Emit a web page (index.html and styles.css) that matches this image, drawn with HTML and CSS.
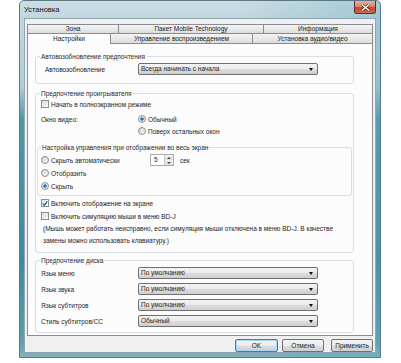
FILE: index.html
```html
<!DOCTYPE html>
<html lang="ru">
<head>
    <meta charset="UTF-8">
    <title>Установка</title>
    <link rel="stylesheet" href="styles.css">
</head>
<body>
    <div class="window">
        <div class="titlebar">
            <span class="title">Установка</span>
            <span class="close">
                <svg width="9" height="7" viewBox="0 0 9 7"><path d="M1 0.5 L8 6.5 M8 0.5 L1 6.5" stroke="#5a1a10" stroke-width="2.6"/><path d="M1 0.5 L8 6.5 M8 0.5 L1 6.5" stroke="#fff" stroke-width="1.4"/></svg>
            </span>
        </div>

        <div class="client">
            <div class="tabs">
                <div class="tab-row">
                    <div class="tab t-zone">Зона</div>
                    <div class="tab t-mobile">Пакет Mobile Technology</div>
                    <div class="tab t-info">Информация</div>
                </div>
                <div class="tab-row front">
                    <div class="tab t-settings active">Настройки</div>
                    <div class="tab t-playback">Управление воспроизведением</div>
                    <div class="tab t-av">Установка аудио/видео</div>
                </div>
            </div>

            <div class="panel">
                <fieldset class="group g-resume">
                    <legend>Автовозобновление предпочтения</legend>
                    <div class="field-row">
                        <span class="label">Автовозобновление</span>
                        <div class="select"><span>Всегда начинать с начала</span><i class="arrow"></i></div>
                    </div>
                </fieldset>

                <fieldset class="group g-player">
                    <legend>Предпочтение проигрывателя</legend>
                    <div class="check-row"><span class="box"></span>Начать в полноэкранном режиме</div>
                    <div class="field-row video-row">
                        <span class="label">Окно видео:</span>
                        <div class="radio-item"><span class="radio on"></span>Обычный</div>
                    </div>
                    <div class="field-row">
                        <span class="label"></span>
                        <div class="radio-item"><span class="radio"></span>Поверх остальных окон</div>
                    </div>

                    <fieldset class="group inner">
                        <legend>Настройка управления при отображении во весь экран</legend>
                        <div class="radio-row">
                            <div class="radio-item auto"><span class="radio"></span>Скрыть автоматически</div>
                            <div class="spin">
                                <span class="spin-value">5</span>
                                <span class="spin-btns"><i class="up"></i><i class="down"></i></span>
                            </div>
                            <span class="unit">сек</span>
                        </div>
                        <div class="radio-row">
                            <div class="radio-item"><span class="radio"></span>Отобразить</div>
                        </div>
                        <div class="radio-row">
                            <div class="radio-item"><span class="radio on"></span>Скрыть</div>
                        </div>
                    </fieldset>

                    <div class="check-row first"><span class="box checked">
                        <svg width="7" height="7" viewBox="0 0 7 7"><path d="M1 3.6 L2.8 5.5 L6.2 1" fill="none" stroke="#2656a8" stroke-width="1.4"/></svg>
                    </span>Включить отображение на экране</div>
                    <div class="check-row"><span class="box"></span>Включить симуляцию мыши в меню BD-J</div>
                    <p class="note">(Мышь может работать неисправно, если симуляция мыши отключена в меню BD-J. В качестве<br>замены можно использовать клавиатуру.)</p>
                </fieldset>

                <fieldset class="group g-disc">
                    <legend>Предпочтение диска</legend>
                    <div class="field-row">
                        <span class="label">Язык меню</span>
                        <div class="select"><span>По умолчанию</span><i class="arrow"></i></div>
                    </div>
                    <div class="field-row">
                        <span class="label">Язык звука</span>
                        <div class="select"><span>По умолчанию</span><i class="arrow"></i></div>
                    </div>
                    <div class="field-row">
                        <span class="label">Язык субтитров</span>
                        <div class="select"><span>По умолчанию</span><i class="arrow"></i></div>
                    </div>
                    <div class="field-row">
                        <span class="label">Стиль субтитров/CC</span>
                        <div class="select"><span>Обычный</span><i class="arrow"></i></div>
                    </div>
                </fieldset>
            </div>

            <div class="buttons">
                <button class="btn btn-ok">OK</button>
                <button class="btn btn-cancel">Отмена</button>
                <button class="btn btn-apply">Применить</button>
            </div>
        </div>
    </div>
</body>
</html>
```

FILE: styles.css
```css
* {
    margin: 0;
    padding: 0;
    box-sizing: border-box;
}

body {
    background-color: #fff;
    font-family: "Liberation Sans", Arial, sans-serif;
    font-size: 6.5px;
    color: #1e1e1e;
}

/* window frame */
.window {
    margin-left: 19px;
    width: 362px;
    height: 358px;
    border: 1px solid #5b7886;
    border-radius: 5px 5px 0 0;
    padding: 0 4px 4px;
    display: flex;
    flex-direction: column;
    background:
        linear-gradient(90deg, rgba(255,255,255,0) 60%, rgba(90,170,190,0.35) 100%),
        linear-gradient(180deg, #cddde4 0px, #c2d6de 20px, #b3ced8 85px, #4f98aa 118px, #3b8ca1 260px, #5c9fae 340px, #86b5bf 358px);
}

.titlebar {
    height: 17px;
    display: flex;
    justify-content: space-between;
    align-items: flex-start;
}

.title {
    line-height: 17px;
    font-size: 7.5px;
    color: #111;
}

.close {
    width: 22px;
    height: 13px;
    border: 1px solid #6b2a1e;
    border-top: none;
    border-radius: 0 0 3px 3px;
    background: linear-gradient(180deg, #e9b1a3 0%, #d98570 45%, #c4452c 55%, #d0684c 100%);
    display: flex;
    align-items: center;
    justify-content: center;
}

.client {
    flex: 1;
    border: 1px solid #8ea4ae;
    background-color: #f0f0f0;
    padding: 5px 2px 0 2px;
    display: flex;
    flex-direction: column;
}

/* tabs */
.tab-row {
    display: flex;
    height: 9px;
}

.tab-row.front {
    height: 10px;
}

.tab {
    border: 1px solid #898c95;
    border-bottom: none;
    background: linear-gradient(180deg, #f4f4f4 0%, #e9e9e9 50%, #dcdcdc 100%);
    text-align: center;
    line-height: 8px;
    color: #222;
    margin-left: -1px;
}

.tab:first-child {
    margin-left: 0;
}

.front .tab {
    line-height: 9px;
}

.tab.active {
    background: #fcfcfc;
    height: 11px;
    position: relative;
    z-index: 1;
}

.t-zone { width: 92px; }
.t-mobile { width: 146px; }
.t-info { width: 110px; }
.t-settings { width: 84px; }
.t-playback { width: 143px; }
.t-av { width: 121px; }

/* panel */
.panel {
    height: 293px;
    border: 1px solid #898c95;
    background-color: #fcfcfc;
    padding: 8px 18px 0 7px;
}

.group {
    border: 1px solid #d5dfe5;
    border-radius: 3px;
    padding: 2px 5px 8px 5px;
}

.group legend {
    line-height: 9px;
    padding: 0 1px;
    margin-left: -1px;
    color: #2a2a2a;
}

.g-player {
    margin-top: 5px;
    padding-top: 0;
    padding-bottom: 5px;
}

.g-disc {
    margin-top: 3px;
    padding-bottom: 5px;
}

.g-disc .field-row + .field-row {
    margin-top: 4px;
}

.field-row {
    display: grid;
    grid-template-columns: 97px 180px;
    align-items: center;
    height: 12px;
}

.g-resume .label {
    padding-left: 4px;
}

.video-row {
    margin-top: 3px;
}

.select {
    height: 12px;
    border: 1px solid #707070;
    border-radius: 2px;
    background: linear-gradient(180deg, #f3f3f3 0%, #ebebeb 50%, #dddddd 51%, #cfcfcf 100%);
    display: flex;
    align-items: center;
    justify-content: space-between;
    padding: 0 4px 0 2px;
    line-height: 10px;
}

.arrow {
    width: 0;
    height: 0;
    border-left: 2.5px solid transparent;
    border-right: 2.5px solid transparent;
    border-top: 3px solid #111;
}

/* checkboxes and radios */
.check-row {
    display: flex;
    align-items: center;
    height: 12px;
    gap: 2px;
}

.check-row.first {
    margin-top: 1px;
}

.check-row + .check-row {
    margin-top: 1px;
}

.box {
    width: 8px;
    height: 8px;
    border: 1px solid #8e8f8f;
    background: linear-gradient(135deg, #dcdcdc 0%, #f6f6f6 100%);
    display: flex;
    align-items: center;
    justify-content: center;
}

.box.checked {
    background: linear-gradient(135deg, #e4e4e4 0%, #fafafa 100%);
}

.radio-item {
    display: flex;
    align-items: center;
    gap: 2px;
}

.radio {
    width: 8px;
    height: 8px;
    border-radius: 50%;
    border: 1px solid #8e8f8f;
    background: linear-gradient(135deg, #d6d6d6 0%, #f7f7f7 100%);
}

.radio.on {
    background: radial-gradient(circle, #1f5fae 0%, #3d86d1 35%, #dfe8f0 45%, #eeeeee 100%);
}

.inner {
    margin: 6px -4px 0;
    padding: 2px 3px 3px 3px;
}

.inner legend {
    margin-left: 0;
}

.radio-row {
    display: flex;
    align-items: center;
    height: 12px;
}

.radio-row + .radio-row {
    margin-top: 1px;
}

.radio-item.auto {
    width: 109px;
}

.spin {
    width: 24px;
    height: 12px;
    border: 1px solid #abadb3;
    background-color: #fff;
    display: flex;
    justify-content: space-between;
}

.spin-value {
    padding-left: 3px;
    line-height: 10px;
}

.spin-btns {
    width: 9px;
    display: flex;
    flex-direction: column;
    border-left: 1px solid #c9c9c9;
}

.spin-btns i {
    flex: 1;
    background: linear-gradient(180deg, #f2f2f2, #dedede);
    display: flex;
    align-items: center;
    justify-content: center;
}

.spin-btns .up::after {
    content: "";
    border-left: 2px solid transparent;
    border-right: 2px solid transparent;
    border-bottom: 2px solid #444;
}

.spin-btns .down::after {
    content: "";
    border-left: 2px solid transparent;
    border-right: 2px solid transparent;
    border-top: 2px solid #444;
}

.unit {
    margin-left: 6px;
}

.note {
    margin-top: 1px;
    line-height: 12px;
    padding-left: 2px;
    white-space: nowrap;
}

/* dialog buttons */
.buttons {
    display: flex;
    justify-content: flex-end;
    margin-top: 3px;
}

.btn {
    height: 13px;
    font-family: "Liberation Sans", Arial, sans-serif;
    font-size: 6.5px;
    color: #1e1e1e;
    border: 1px solid #707070;
    border-radius: 2px;
    background: linear-gradient(180deg, #f3f3f3 0%, #ebebeb 50%, #dddddd 51%, #cfcfcf 100%);
}

.btn-ok {
    width: 43px;
    margin-right: 4px;
    border-color: #3c7fb1;
    box-shadow: inset 0 0 0 1px #a6d5f3;
}

.btn-cancel {
    width: 42px;
    margin-right: 7px;
}

.btn-apply {
    width: 42px;
}
```
